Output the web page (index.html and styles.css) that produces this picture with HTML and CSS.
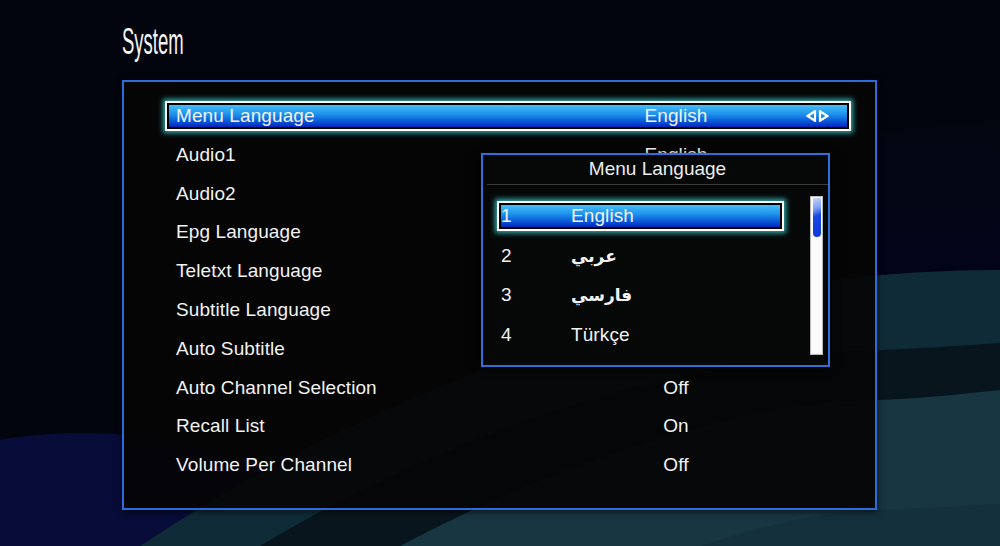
FILE: index.html
```html
<!DOCTYPE html>
<html lang="en">
<head>
    <meta charset="UTF-8">
    <title>System</title>
    <link rel="stylesheet" href="styles.css">
</head>
<body>
    <svg class="waves" viewBox="0 0 1000 546" preserveAspectRatio="none">
        <defs>
            <linearGradient id="navy" x1="0" y1="0" x2="0" y2="1">
                <stop offset="0" stop-color="#03050f"/>
                <stop offset="0.5" stop-color="#02031e"/>
                <stop offset="1" stop-color="#020426"/>
            </linearGradient>
        </defs>
        <path d="M600 140 C760 150 900 130 1000 120 L1000 546 L600 546 Z" fill="url(#navy)"/>
        <path d="M0 440 C120 420 260 440 400 546 L0 546 Z" fill="#080c38"/>
        <path d="M140 546 C360 400 620 300 880 275 C930 271 970 270 1000 270 L1000 546 Z" fill="#0f2b38"/>
        <path d="M260 546 C470 420 700 355 880 350 C930 348 970 345 1000 343 L1000 546 Z" fill="#08151d"/>
        <path d="M400 546 C600 440 780 400 880 400 C930 398 970 393 1000 390 L1000 546 Z" fill="#183542"/>
        <path d="M700 546 C780 520 840 510 880 510 C930 508 970 505 1000 504 L1000 546 Z" fill="#13303c"/>
    </svg>

    <div class="screen">
        <div class="title"><span>System</span></div>

        <div class="panel">
            <div class="list">
                <div class="row sel">
                    <div class="bar">
                        <span class="label">Menu Language</span>
                        <span class="value">English</span>
                        <span class="arrows">
                            <svg width="23" height="12" viewBox="0 0 23 12">
                                <polygon points="1.5,6 9,1.2 9,10.8" fill="none" stroke="#fff" stroke-width="2.2"/>
                                <polygon points="14,1.2 21.5,6 14,10.8" fill="none" stroke="#fff" stroke-width="2.2"/>
                            </svg>
                        </span>
                    </div>
                </div>
                <div class="row"><div class="bar"><span class="label">Audio1</span><span class="value">English</span><span class="arrows"></span></div></div>
                <div class="row"><div class="bar"><span class="label">Audio2</span><span class="value">English</span><span class="arrows"></span></div></div>
                <div class="row"><div class="bar"><span class="label">Epg Language</span><span class="value">English</span><span class="arrows"></span></div></div>
                <div class="row"><div class="bar"><span class="label">Teletxt Language</span><span class="value">English</span><span class="arrows"></span></div></div>
                <div class="row"><div class="bar"><span class="label">Subtitle Language</span><span class="value">English</span><span class="arrows"></span></div></div>
                <div class="row"><div class="bar"><span class="label">Auto Subtitle</span><span class="value">Off</span><span class="arrows"></span></div></div>
                <div class="row"><div class="bar"><span class="label">Auto Channel Selection</span><span class="value">Off</span><span class="arrows"></span></div></div>
                <div class="row"><div class="bar"><span class="label">Recall List</span><span class="value">On</span><span class="arrows"></span></div></div>
                <div class="row"><div class="bar"><span class="label">Volume Per Channel</span><span class="value">Off</span><span class="arrows"></span></div></div>
            </div>

            <div class="popup">
                <div class="popup-title">Menu Language</div>
                <div class="popup-line"></div>
                <div class="popup-body">
                    <div class="options">
                        <div class="row opt sel"><div class="bar"><span class="num">1</span><span>English</span></div></div>
                        <div class="row opt"><div class="bar"><span class="num">2</span><span class="ar">عربي</span></div></div>
                        <div class="row opt"><div class="bar"><span class="num">3</span><span class="ar">فارسي</span></div></div>
                        <div class="row opt"><div class="bar"><span class="num">4</span><span>Türkçe</span></div></div>
                    </div>
                    <div class="scroll">
                        <div class="thumb"></div>
                    </div>
                </div>
            </div>
        </div>
    </div>
</body>
</html>
```

FILE: styles.css
```css
body {
    margin: 0;
    padding: 0;
    width: 1000px;
    height: 546px;
    overflow: hidden;
    background: #03050e;
    font-family: 'Liberation Sans', Arial, 'DejaVu Sans', sans-serif;
    color: #f2f2f2;
}

.waves {
    position: absolute;
    top: 0;
    left: 0;
    width: 1000px;
    height: 546px;
    z-index: 0;
}

.screen {
    position: relative;
    z-index: 1;
    padding: 23px 0 0 122px;
}

.title {
    height: 37px;
    font-size: 37px;
    line-height: 37px;
    color: #f4f4f4;
}

.title span {
    display: inline-block;
    transform: scaleX(0.5);
    transform-origin: left center;
}

.panel {
    position: relative;
    box-sizing: border-box;
    margin-top: 20px;
    width: 755px;
    height: 430px;
    border: 2px solid #2c6cd8;
    background: rgba(5, 5, 5, 0.93);
    box-shadow: 0 2px 6px rgba(0, 0, 0, 0.6);
    padding: 19px 24px 0 41px;
}

.list {
    display: flex;
    flex-direction: column;
    gap: 8.8px;
}

.row {
    box-sizing: border-box;
    height: 30px;
    border: 2px solid transparent;
    padding: 2px;
}

.row.sel {
    border-color: #ffffff;
    background: #000;
    box-shadow: 0 0 5px 2px rgba(70, 225, 225, 0.75);
}

.bar {
    display: flex;
    align-items: center;
    height: 100%;
    padding-left: 7px;
    font-size: 19px;
    letter-spacing: 0.1px;
}

.sel .bar {
    background: linear-gradient(#46bdf9 0%, #1f95ec 40%, #0b5cda 72%, #0026bd 100%);
}

.label {
    flex: 1;
}

.value {
    width: 204px;
    text-align: center;
}

.arrows {
    display: flex;
    width: 23px;
    margin: 0 18px 0 28px;
}

.popup {
    position: absolute;
    z-index: 2;
    left: 357px;
    top: 71px;
    box-sizing: border-box;
    width: 349px;
    height: 214px;
    border: 2px solid #2e6fd8;
    background: #060808;
    box-shadow: 0 2px 8px rgba(0, 0, 0, 0.7);
}

.popup-title {
    height: 29px;
    line-height: 27px;
    text-align: center;
    font-size: 19px;
    color: #ececec;
    padding-left: 4px;
}

.popup-line {
    height: 1px;
    margin: 0 0 0 4px;
    background: #3c3c3c;
}

.popup-body {
    display: flex;
    padding: 11px 5px 0 14px;
}

.options {
    width: 287px;
    display: flex;
    flex-direction: column;
    gap: 9.6px;
    padding-top: 5px;
}

.opt .bar {
    padding-left: 0;
}

.num {
    width: 70px;
}

.ar {
    font-family: 'DejaVu Sans', sans-serif;
    font-weight: bold;
    font-size: 17px;
}

.scroll {
    box-sizing: border-box;
    width: 13px;
    height: 159px;
    margin-left: 26px;
    background: #fbfbfb;
    border: 1px solid #b8b8b8;
    padding: 1px 1px 0 2px;
}

.thumb {
    height: 39px;
    border-radius: 1px 1px 5px 5px;
    background: linear-gradient(160deg, #c8d6f6 0%, #7a9ef0 28%, #1a48e2 46%, #0a38dc 100%);
}
```
